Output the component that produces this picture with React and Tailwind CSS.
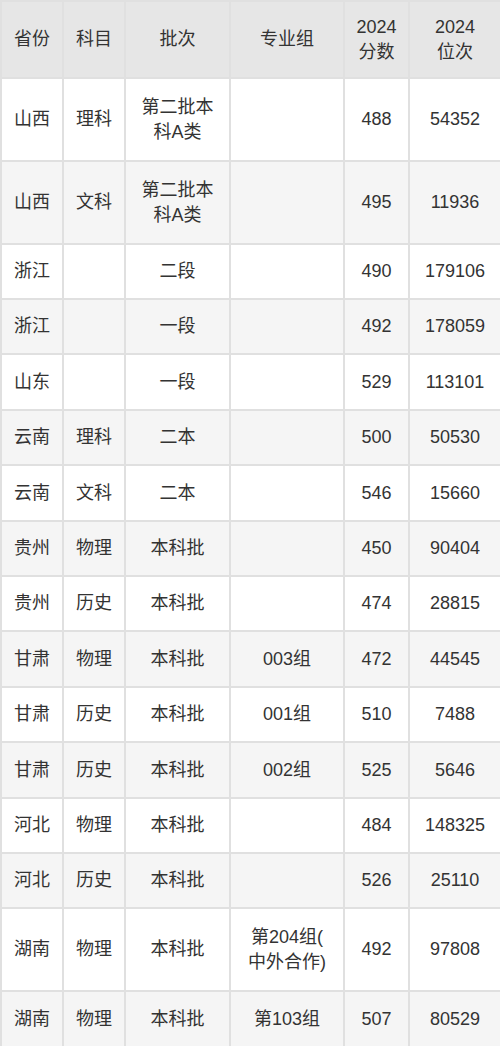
import React from "react";

const filas = [
  { sheng: "山西", kemu: "理科", pici: ["第二批本", "科A类"], zu: "", fen: "488", wei: "54352", h: 83 },
  { sheng: "山西", kemu: "文科", pici: ["第二批本", "科A类"], zu: "", fen: "495", wei: "11936", h: 83 },
  { sheng: "浙江", kemu: "", pici: ["二段"], zu: "", fen: "490", wei: "179106", h: 55 },
  { sheng: "浙江", kemu: "", pici: ["一段"], zu: "", fen: "492", wei: "178059", h: 55 },
  { sheng: "山东", kemu: "", pici: ["一段"], zu: "", fen: "529", wei: "113101", h: 56 },
  { sheng: "云南", kemu: "理科", pici: ["二本"], zu: "", fen: "500", wei: "50530", h: 55 },
  { sheng: "云南", kemu: "文科", pici: ["二本"], zu: "", fen: "546", wei: "15660", h: 56 },
  { sheng: "贵州", kemu: "物理", pici: ["本科批"], zu: "", fen: "450", wei: "90404", h: 55 },
  { sheng: "贵州", kemu: "历史", pici: ["本科批"], zu: "", fen: "474", wei: "28815", h: 55 },
  { sheng: "甘肃", kemu: "物理", pici: ["本科批"], zu: "003组", fen: "472", wei: "44545", h: 56 },
  { sheng: "甘肃", kemu: "历史", pici: ["本科批"], zu: "001组", fen: "510", wei: "7488", h: 55 },
  { sheng: "甘肃", kemu: "历史", pici: ["本科批"], zu: "002组", fen: "525", wei: "5646", h: 56 },
  { sheng: "河北", kemu: "物理", pici: ["本科批"], zu: "", fen: "484", wei: "148325", h: 55 },
  { sheng: "河北", kemu: "历史", pici: ["本科批"], zu: "", fen: "526", wei: "25110", h: 55 },
  { sheng: "湖南", kemu: "物理", pici: ["本科批"], zu: ["第204组(", "中外合作)"], fen: "492", wei: "97808", h: 83 },
  { sheng: "湖南", kemu: "物理", pici: ["本科批"], zu: "第103组", fen: "507", wei: "80529", h: 56 },
];

const lineas = (v) =>
  Array.isArray(v)
    ? v.map((l, i) => (
        <React.Fragment key={i}>
          {i > 0 && <br />}
          {l}
        </React.Fragment>
      ))
    : v;

export default function App() {
  // el tamaño va en cada celda: la tabla no siempre hereda font-size
  const celda =
    "border-2 border-[#e0e0e0] text-center align-middle px-1 whitespace-nowrap font-['Liberation_Sans','Noto_Sans_CJK_SC',sans-serif] text-[18px] leading-[25px] text-[#333333] font-normal";

  return (
    <div className="w-[500px] bg-white">
      <table className="w-[500px] border-collapse table-fixed text-[18px]">
        <colgroup>
          <col className="w-[62px]" />
          <col className="w-[62px]" />
          <col className="w-[105px]" />
          <col className="w-[114px]" />
          <col className="w-[65px]" />
          <col className="w-[92px]" />
        </colgroup>
        <thead>
          <tr className="bg-[#e6e6e6]">
            <th className={`${celda} h-[77px]`}>省份</th>
            <th className={celda}>科目</th>
            <th className={celda}>批次</th>
            <th className={celda}>专业组</th>
            <th className={celda}>
              2024
              <br />
              分数
            </th>
            <th className={celda}>
              2024
              <br />
              位次
            </th>
          </tr>
        </thead>
        <tbody>
          {filas.map((f, i) => (
            <tr key={i} className={i % 2 === 0 ? "bg-white" : "bg-[#f5f5f5]"}>
              <td className={celda} style={{ height: f.h }}>
                {f.sheng}
              </td>
              <td className={celda}>{f.kemu}</td>
              <td className={celda}>{lineas(f.pici)}</td>
              <td className={celda}>{lineas(f.zu)}</td>
              <td className={celda}>{f.fen}</td>
              <td className={celda}>{f.wei}</td>
            </tr>
          ))}
        </tbody>
      </table>
    </div>
  );
}
